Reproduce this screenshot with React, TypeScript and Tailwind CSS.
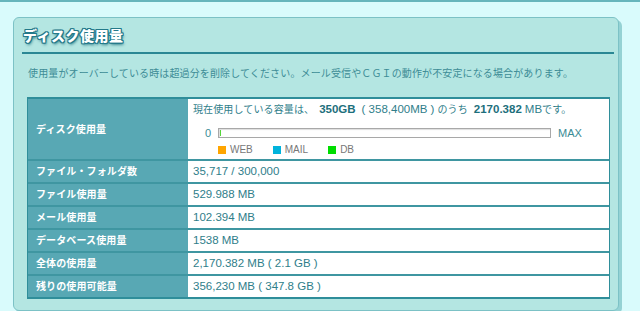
import React from "react";

const J = ({ children, className = "" }: { children: React.ReactNode; className?: string }) => (
  <span className={`text-[10px] tracking-[0.12px] ${className}`}>{children}</span>
);

const rows: { label: string; value: React.ReactNode }[] = [
  { label: "ファイル・フォルダ数", value: "35,717 / 300,000" },
  { label: "ファイル使用量", value: "529.988 MB" },
  { label: "メール使用量", value: "102.394 MB" },
  { label: "データベース使用量", value: "1538 MB" },
  { label: "全体の使用量", value: "2,170.382 MB ( 2.1 GB )" },
  { label: "残りの使用可能量", value: "356,230 MB ( 347.8 GB )" },
];

export default function App() {
  return (
    <div className="w-[640px] h-[311px] overflow-hidden bg-[#d9fbfc] [font-family:'Liberation_Sans','Noto_Sans_CJK_JP',sans-serif]">
      <div className="h-[2px] bg-[#66b5bc]" />
      <div className="ml-[13px] mt-[15px] w-[606px] rounded-[6px] border border-[#7cc2c6] bg-[#b4e6e2] shadow-[3px_3px_0_#95d2d4] pb-[11px]">
        <div className="h-[34px] flex items-center pl-[9px]">
          <span className="text-[14px] font-black text-white tracking-[0.5px] [text-shadow:1px_0_0_#23798a,-1px_0_0_#23798a,0_1px_0_#23798a,0_-1px_0_#23798a,1px_1px_0_#23798a,-1px_-1px_0_#23798a,1px_-1px_0_#23798a,-1px_1px_0_#23798a,1px_2px_3px_#1d6f7c] [font-family:'Noto_Sans_CJK_JP',sans-serif]">
            ディスク使用量
          </span>
        </div>
        <div className="ml-[8px] mr-[4px] h-[2px] bg-[#2a8794]" />
        <div className="mt-[12px] pl-[14px] h-[14px] leading-[14px] text-[10px] tracking-[0.13px] text-[#3d8c96] [font-family:'Noto_Sans_CJK_JP',sans-serif]">
          使用量がオーバーしている時は超過分を削除してください。メール受信やＣＧＩの動作が不安定になる場合があります。
        </div>
        <div className="mt-[17px] ml-[13px] w-[583px] border-t-2 border-b-2 border-x border-[#2f8e9a]">
          <div className="flex border-b-2 border-[#3f96a1]">
            <div className="w-[160px] h-[60px] bg-[#58a8b4] flex items-center pl-[8px]">
              <J className="font-bold text-white">ディスク使用量</J>
            </div>
            <div className="flex-1 h-[60px] bg-white pl-[5px] text-[#2f7e8a]">
              <div className="pt-[3px] h-[17px] leading-[14px] flex items-baseline text-[11.5px] whitespace-nowrap">
                <J>現在使用している容量は、</J>
                <span className="ml-[5px] font-bold text-[#1d6f7c]">350GB</span>
                <span className="ml-[6px]">( 358,400MB )</span>
                <J className="ml-[3px]">のうち</J>
                <span className="ml-[6px] font-bold text-[#1d6f7c]">2170.382</span>
                <span className="ml-[3px]">MB</span>
                <J>です。</J>
              </div>
              <div className="mt-[12px] h-[10px] flex items-center pl-[12px]">
                <span className="text-[11px] leading-[10px] text-[#3a8b95] w-[6px]">0</span>
                <div className="ml-[7px] w-[333px] h-[10px] border border-[#a8a8a8] bg-white shadow-[inset_1px_1px_1px_#dddddd] flex items-stretch">
                  <div className="w-[1px] my-[1px] ml-[1px] bg-[#55d63a]" />
                </div>
                <span className="ml-[7px] text-[11px] leading-[10px] text-[#3a8b95]">MAX</span>
              </div>
              <div className="mt-[8px] h-[8px] flex items-center pl-[25px] gap-[20px] text-[10px] text-[#777777]">
                <div className="flex items-center gap-[4px]">
                  <div className="w-[8px] h-[8px] bg-[#ffa500]" />
                  <span className="leading-[8px]">WEB</span>
                </div>
                <div className="flex items-center gap-[4px]">
                  <div className="w-[8px] h-[8px] bg-[#00b3dc]" />
                  <span className="leading-[8px]">MAIL</span>
                </div>
                <div className="flex items-center gap-[4px]">
                  <div className="w-[8px] h-[8px] bg-[#00dd00]" />
                  <span className="leading-[8px]">DB</span>
                </div>
              </div>
            </div>
          </div>
          {rows.map((r, i) => (
            <div key={r.label} className={`flex ${i < rows.length - 1 ? "border-b-2 border-[#3f96a1]" : ""}`}>
              <div className="w-[160px] h-[21px] bg-[#58a8b4] flex items-center pl-[8px]">
                <J className="font-bold text-white">{r.label}</J>
              </div>
              <div className="flex-1 h-[21px] bg-white pl-[5px] flex items-center text-[11.5px] text-[#2f7e8a] whitespace-nowrap">
                {r.value}
              </div>
            </div>
          ))}
        </div>
      </div>
    </div>
  );
}
